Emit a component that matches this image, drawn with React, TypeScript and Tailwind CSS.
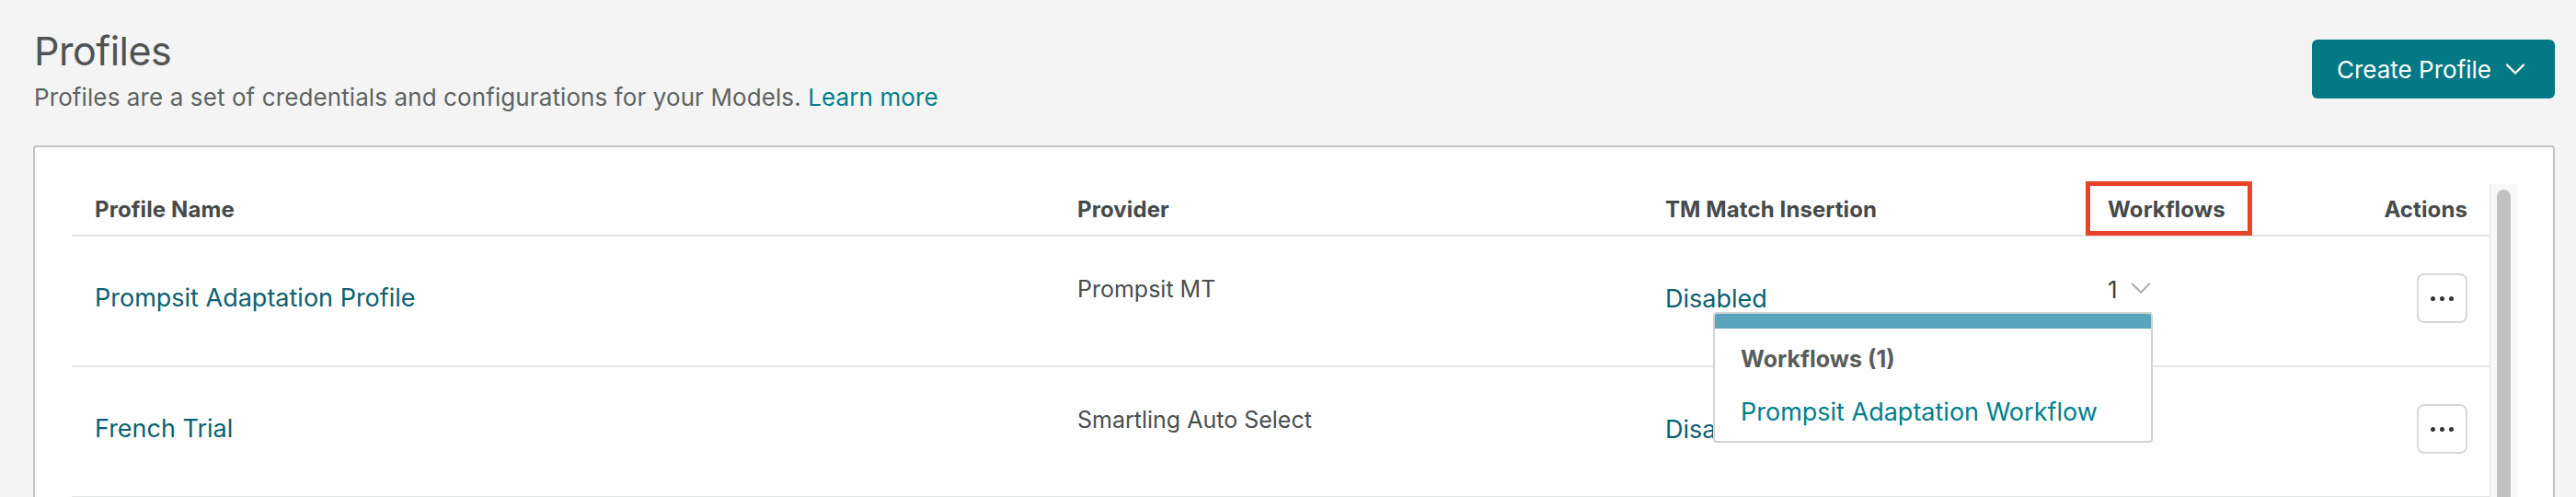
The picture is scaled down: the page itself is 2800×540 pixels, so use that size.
import { ChevronDown } from "lucide-react";

interface Profile {
    id: string;
    name: string;
    provider: string;
    tmMatch: string;
    workflows: number;
}

const profiles: Profile[] = [
    { id: "1", name: "Prompsit Adaptation Profile", provider: "Prompsit MT", tmMatch: "Disabled", workflows: 1 },
    { id: "2", name: "French Trial", provider: "Smartling Auto Select", tmMatch: "Disabled", workflows: 0 },
];

const cols = "grid grid-cols-[1068px_639px_481px_264px_176px]";

const ActionsButton = () => (
    <button className="flex h-[54px] w-[55px] items-center justify-center gap-[5px] rounded-[8px] border-2 border-[#d7d9d9] bg-white">
        <span className="h-[5px] w-[5px] rounded-full bg-[#2f3333]" />
        <span className="h-[5px] w-[5px] rounded-full bg-[#2f3333]" />
        <span className="h-[5px] w-[5px] rounded-full bg-[#2f3333]" />
    </button>
);

const WorkflowsPopover = () => (
    <div className="absolute left-[1784px] top-[82px] z-10 w-[478px] overflow-hidden rounded-[4px] border-2 border-[#d0d4d4] bg-white">
        <div className="-mx-[2px] -mt-[2px] h-[18px] bg-[#59a5bd]" />
        <div className="px-[28px] pt-[14px] pb-[12px]">
            <div className="text-[25px] font-bold leading-[38px] text-[#585c5c]">Workflows (1)</div>
            <div className="mt-[20px] text-[27px] leading-[38px] text-[#00808c]">Prompsit Adaptation Workflow</div>
        </div>
    </div>
);

export default function App() {
    return (
        <div className="h-[540px] overflow-hidden bg-[#f3f4f3] pl-[37px] pr-[23px] font-['Inter',sans-serif]">
            <div className="flex justify-between">
                <div className="pt-[29px]">
                    <h1 className="text-[43px] leading-[53px] tracking-[-0.5px] text-[#4f5353]">Profiles</h1>
                    <p className="mt-[5px] text-[26px] leading-[38px] tracking-[0.1px] text-[#5f6363]">
                        Profiles are a set of credentials and configurations for your Models.{" "}
                        <a className="text-[#00808c]">Learn more</a>
                    </p>
                </div>
                <button className="mt-[43px] flex h-[64px] w-[264px] items-center gap-[8px] rounded-[6px] bg-[#037985] pl-[27px] text-[26px] text-white">
                    Create Profile
                    <ChevronDown size={36} strokeWidth={1.5} />
                </button>
            </div>

            <div className="-ml-px mt-[33px] h-[600px] rounded-t-[3px] border-2 border-[#c2c5c5] bg-white pl-[40px] pt-[40px]">
                <div className="flex">
                    <div className="w-[2628px]">
                        {/* header */}
                        <div className={`${cols} h-[57px] border-b-2 border-[#e3e5e5] text-[24px] font-bold tracking-[0.1px] text-[#464a4a]`}>
                            <div className="flex items-center pl-[25px]">Profile Name</div>
                            <div className="flex items-center pl-[25px]">Provider</div>
                            <div className="flex items-center pl-[25px]">TM Match Insertion</div>
                            <div className="relative flex items-center pl-[25px]">
                                Workflows
                                <span className="absolute left-px top-[-3px] h-[59px] w-[181px] border-[5px] border-[#e8432a]" />
                            </div>
                            <div className="flex items-center justify-end pr-[24px]">Actions</div>
                        </div>

                        {/* rows */}
                        {profiles.map((profile, idx) => (
                            <div key={profile.id} className={`${cols} relative h-[142px] border-b-2 border-[#e3e5e5] text-[27px]`}>
                                <div className="flex items-center pb-[6px] pl-[25px] text-[#0b6170]">{profile.name}</div>
                                <div className="pl-[25px] pt-[38px] text-[25px] leading-[38px] text-[#4a4e4f]">{profile.provider}</div>
                                <div className="flex items-center pb-[4px] pl-[25px] text-[#0b6170]">{profile.tmMatch}</div>
                                <div className="pl-[25px] pt-[39px] text-[26px] leading-[38px] text-[#3f4343]">
                                    {profile.workflows > 0 && (
                                        <span className="flex items-center gap-[6px]">
                                            {profile.workflows}
                                            <ChevronDown size={38} strokeWidth={1.2} className="-mt-[4px] text-[#a6aeae]" />
                                        </span>
                                    )}
                                </div>
                                <div className="flex items-center justify-end pb-[6px] pr-[24px]">
                                    <ActionsButton />
                                </div>
                                {idx === 0 && <WorkflowsPopover />}
                            </div>
                        ))}
                    </div>

                    {/* scrollbar */}
                    <div className="w-[30px] border-l border-[#e6e6e6] bg-[#f8f8f8] px-[7px] pt-[6px]">
                        <div className="h-[400px] rounded-full bg-[#c1c1c1]" />
                    </div>
                </div>
            </div>
        </div>
    );
}
